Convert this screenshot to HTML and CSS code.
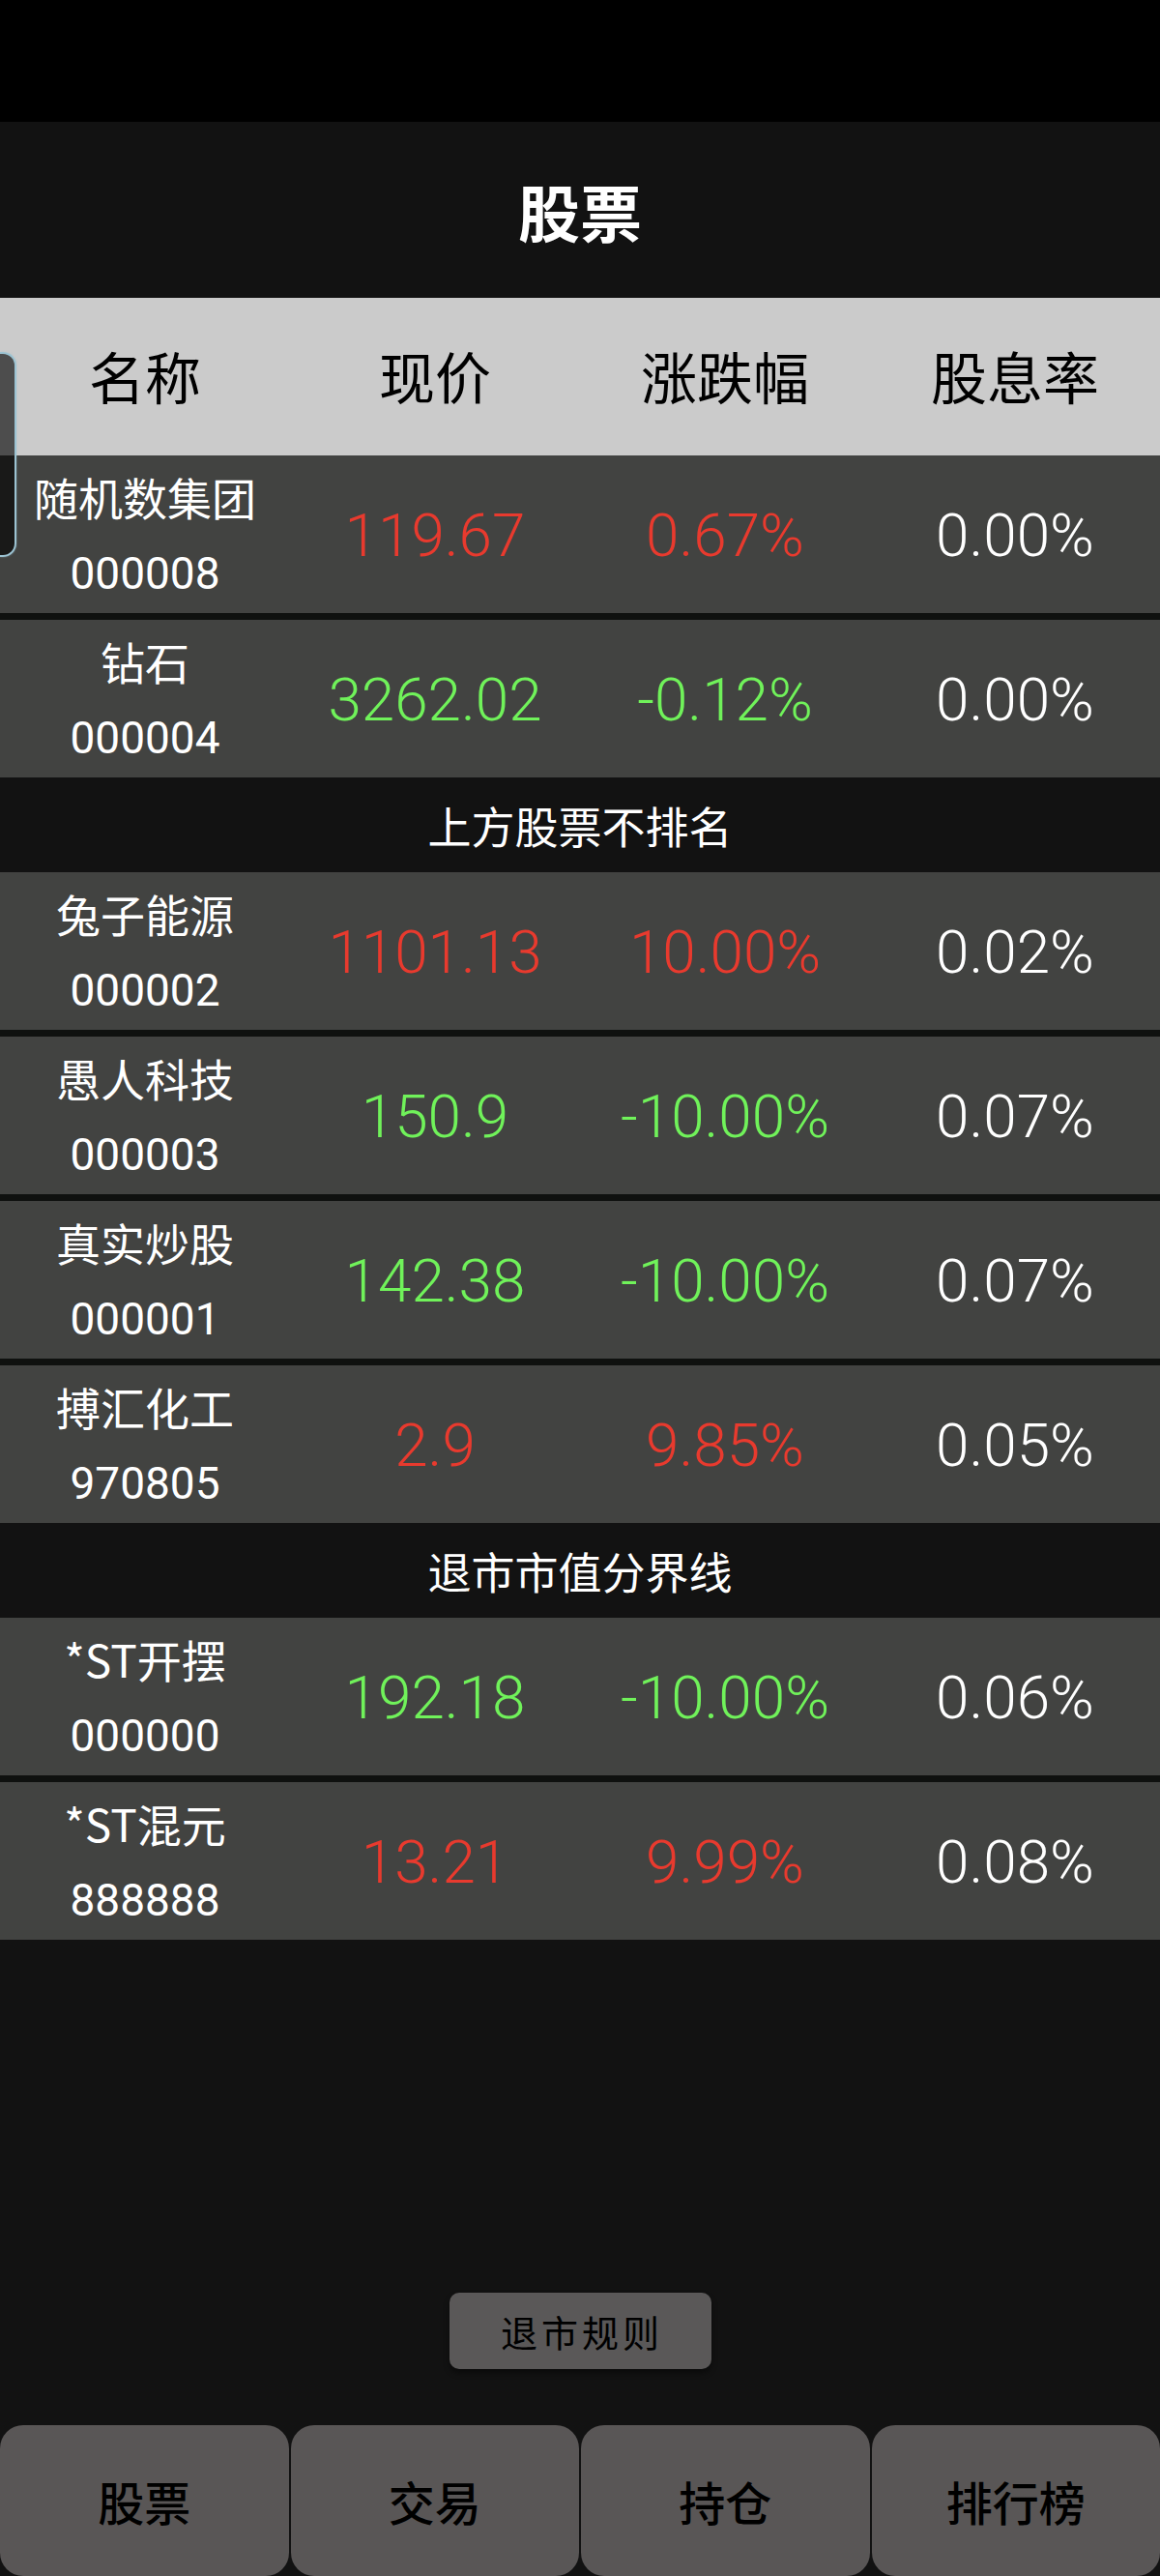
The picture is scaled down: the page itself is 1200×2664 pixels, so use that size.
FILE: index.html
```html
<!DOCTYPE html>
<html lang="zh-CN">
<head>
<meta charset="utf-8">
<title>股票</title>
<link rel="stylesheet" href="styles.css">
</head>
<body>
<div class="app">
  <div class="status"></div>
  <header class="title">股票</header>
  <div class="thead">
    <div class="th">名称</div>
    <div class="th">现价</div>
    <div class="th">涨跌幅</div>
    <div class="th">股息率</div>
  </div>
  <div class="list">
    <div class="row">
      <div class="cell name"><span class="nm">随机数集团</span><span class="code">000008</span></div>
      <div class="cell num up">119.67</div>
      <div class="cell num up">0.67%</div>
      <div class="cell num">0.00%</div>
    </div>
    <div class="row">
      <div class="cell name"><span class="nm">钻石</span><span class="code">000004</span></div>
      <div class="cell num down">3262.02</div>
      <div class="cell num down">-0.12%</div>
      <div class="cell num">0.00%</div>
    </div>
    <div class="label">上方股票不排名</div>
    <div class="row">
      <div class="cell name"><span class="nm">兔子能源</span><span class="code">000002</span></div>
      <div class="cell num up">1101.13</div>
      <div class="cell num up">10.00%</div>
      <div class="cell num">0.02%</div>
    </div>
    <div class="row">
      <div class="cell name"><span class="nm">愚人科技</span><span class="code">000003</span></div>
      <div class="cell num down">150.9</div>
      <div class="cell num down">-10.00%</div>
      <div class="cell num">0.07%</div>
    </div>
    <div class="row">
      <div class="cell name"><span class="nm">真实炒股</span><span class="code">000001</span></div>
      <div class="cell num down">142.38</div>
      <div class="cell num down">-10.00%</div>
      <div class="cell num">0.07%</div>
    </div>
    <div class="row">
      <div class="cell name"><span class="nm">搏汇化工</span><span class="code">970805</span></div>
      <div class="cell num up">2.9</div>
      <div class="cell num up">9.85%</div>
      <div class="cell num">0.05%</div>
    </div>
    <div class="label">退市市值分界线</div>
    <div class="row">
      <div class="cell name"><span class="nm">*ST开摆</span><span class="code">000000</span></div>
      <div class="cell num down">192.18</div>
      <div class="cell num down">-10.00%</div>
      <div class="cell num">0.06%</div>
    </div>
    <div class="row">
      <div class="cell name"><span class="nm">*ST混元</span><span class="code">888888</span></div>
      <div class="cell num up">13.21</div>
      <div class="cell num up">9.99%</div>
      <div class="cell num">0.08%</div>
    </div>
  </div>
  <div class="spacer"></div>
  <div class="rules-wrap"><button class="rules">退市规则</button></div>
  <nav class="tabs">
    <div class="tab">股票</div>
    <div class="tab">交易</div>
    <div class="tab">持仓</div>
    <div class="tab">排行榜</div>
  </nav>
  <div class="handle"></div>
</div>
</body>
</html>
```

FILE: styles.css
```css
* { box-sizing: border-box; }
html, body {
  margin: 0;
  padding: 0;
  background: #121212;
}
body {
  font-family: "Noto Sans CJK SC", "Noto Sans", sans-serif;
  color: #fff;
}
.app {
  position: relative;
  width: 1200px;
  height: 2664px;
  display: flex;
  flex-direction: column;
  overflow: hidden;
  background: #121212;
}
.status {
  height: 126px;
  background: #000;
  flex: none;
}
.title {
  height: 182px;
  flex: none;
  display: flex;
  align-items: center;
  justify-content: center;
  font-size: 64px;
  font-weight: 700;
  color: #fff;
  background: #121212;
}
.thead {
  height: 163px;
  flex: none;
  display: grid;
  grid-template-columns: repeat(4, 1fr);
  background: #cbcbcb;
}
.th {
  display: flex;
  align-items: center;
  justify-content: center;
  font-size: 58px;
  color: #000;
  padding-bottom: 4px;
}
.list {
  flex: none;
  display: flex;
  flex-direction: column;
  background: #0f110f;
}
.row {
  height: 163px;
  display: grid;
  grid-template-columns: repeat(4, 1fr);
  background: #424341;
}
.row + .row { margin-top: 7px; }
.cell {
  display: flex;
  align-items: center;
  justify-content: center;
}
.name {
  flex-direction: column;
}
.nm {
  height: 80px;
  line-height: 80px;
  font-size: 46px;
  color: #fff;
  white-space: nowrap;
}
.code {
  height: 80px;
  line-height: 80px;
  font-family: Roboto, "Noto Sans", sans-serif;
  font-size: 46px;
  color: #fff;
}
.num {
  font-family: Roboto, "Noto Sans", sans-serif;
  font-weight: 300;
  font-size: 62px;
  color: #fff;
  padding-top: 2px;
}
.up { color: #e83a2e; }
.down { color: #70f25a; }
.label {
  height: 98px;
  display: flex;
  align-items: center;
  justify-content: center;
  font-size: 45px;
  color: #fff;
  background: #121212;
}
.spacer { flex: 1; }
.rules-wrap {
  flex: none;
  display: flex;
  justify-content: center;
  margin-bottom: 58px;
}
.rules {
  width: 271px;
  height: 79px;
  border: none;
  border-radius: 10px;
  background: #5a5858;
  color: #000;
  font-family: "Noto Sans CJK SC", sans-serif;
  font-size: 38px;
  letter-spacing: 4px;
  padding: 0 0 0 4px;
  box-shadow: 0 4px 6px rgba(0, 0, 0, 0.45);
}
.tabs {
  flex: none;
  height: 156px;
  display: grid;
  grid-template-columns: repeat(4, 1fr);
  gap: 2px;
}
.tab {
  display: flex;
  align-items: center;
  justify-content: center;
  background: #595656;
  border-radius: 24px;
  font-size: 48px;
  font-weight: 500;
  color: #000;
}
.handle {
  position: absolute;
  left: 0;
  top: 364px;
  width: 17px;
  height: 212px;
  background: rgba(0, 0, 0, 0.62);
  border: 2px solid #9cc3d2;
  border-left: none;
  border-radius: 0 14px 14px 0;
  box-shadow: 0 0 2px rgba(156, 195, 210, 0.6);
}
```
